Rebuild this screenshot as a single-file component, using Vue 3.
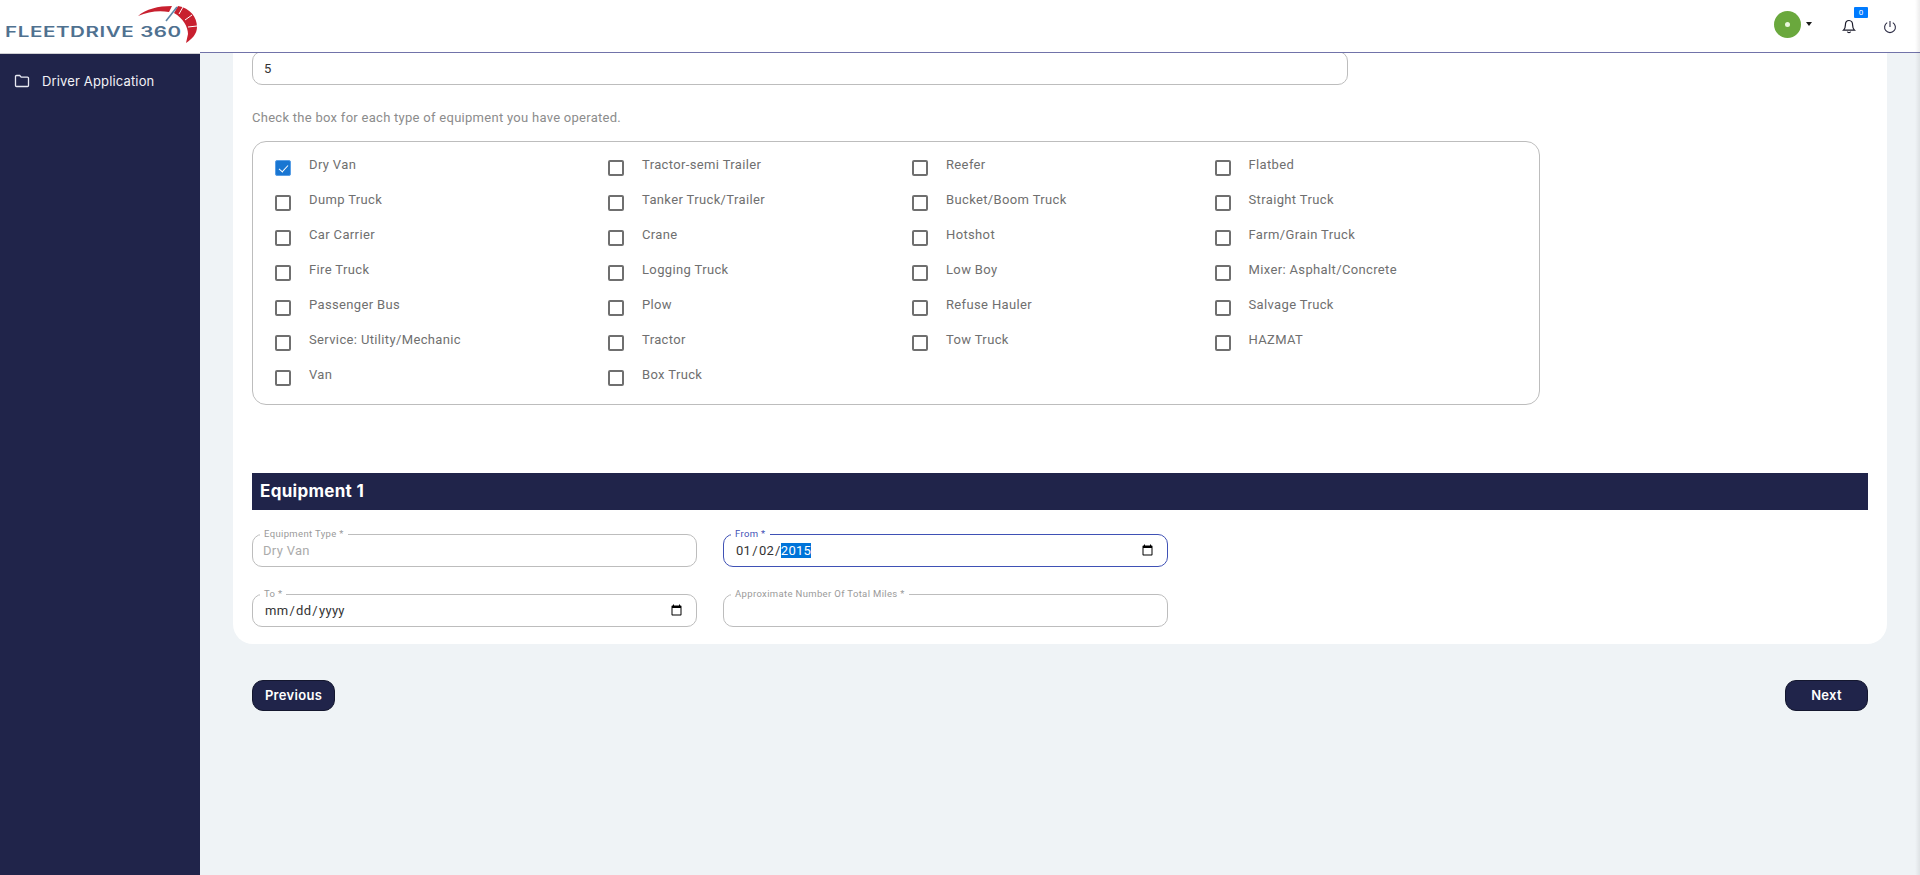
<script setup>
const equipment = [
  'Dry Van', 'Tractor-semi Trailer', 'Reefer', 'Flatbed',
  'Dump Truck', 'Tanker Truck/Trailer', 'Bucket/Boom Truck', 'Straight Truck',
  'Car Carrier', 'Crane', 'Hotshot', 'Farm/Grain Truck',
  'Fire Truck', 'Logging Truck', 'Low Boy', 'Mixer: Asphalt/Concrete',
  'Passenger Bus', 'Plow', 'Refuse Hauler', 'Salvage Truck',
  'Service: Utility/Mechanic', 'Tractor', 'Tow Truck', 'HAZMAT',
  'Van', 'Box Truck'
]
</script>

<template>
  <div class="app">
    <aside class="side">
      <div class="brand">
        <div class="logo">
          <span class="logo-text">FLEETDRIVE 360</span>
          <svg class="gauge" width="70" height="46" viewBox="0 0 70 46">
            <path d="M2 15 C10 8 22 5 36 5 L33 11 C22 9 12 11 2 15Z" fill="#c8202f"/>
            <path d="M42 5 C54 7 61 16 61 26 C61 33 56 38 50 42 L52 33 C52 26 47 17 38 12Z" fill="#c8202f"/>
            <path d="M47 6 L43 13 M56 14 L49 19 M61 25 L52 26" stroke="#fff" stroke-width="1"/>
            <path d="M30 20 L41 6" stroke="#5d86a8" stroke-width="1.6"/>
          </svg>
        </div>
      </div>
      <nav class="nav">
        <a class="nav-item">
          <svg width="16" height="14" viewBox="0 0 16 14" fill="none" stroke="#e8e9f2" stroke-width="1.3">
            <path d="M1.5 2.5 a1 1 0 0 1 1-1 h3.2 l1.5 1.7 h6.3 a1 1 0 0 1 1 1 v7.3 a1 1 0 0 1-1 1 h-11 a1 1 0 0 1-1-1z"/>
          </svg>
          <span>Driver Application</span>
        </a>
      </nav>
    </aside>

    <div class="right">
      <header class="top">
        <div class="avatar-wrap">
          <span class="avatar"><span class="dot"></span></span>
          <span class="caret"></span>
        </div>
        <div class="bell">
          <svg width="14" height="15" viewBox="0 0 14 15" fill="none" stroke="#1b1b2b" stroke-width="1.2">
            <path d="M7 1.5 C4.4 1.5 3.4 3.6 3.4 6 C3.4 9 2.6 10.2 1.5 11.2 H12.5 C11.4 10.2 10.6 9 10.6 6 C10.6 3.6 9.6 1.5 7 1.5Z"/>
            <path d="M5.4 12.6 C5.8 13.9 8.2 13.9 8.6 12.6"/>
          </svg>
          <span class="badge">0</span>
        </div>
        <svg class="power" width="14" height="14" viewBox="0 0 14 14" fill="none" stroke="#2b2b44" stroke-width="1.1">
          <path d="M7 1 V7"/>
          <path d="M4.2 2.6 A5.4 5.4 0 1 0 9.8 2.6"/>
        </svg>
      </header>

      <main class="main">
        <section class="card">
          <input class="plain" type="text" value="5" />
          <p class="hint">Check the box for each type of equipment you have operated.</p>
          <div class="box">
            <label v-for="(name, i) in equipment" :key="name" class="check">
              <input type="checkbox" :checked="i === 0" />
              <span>{{ name }}</span>
            </label>
          </div>

          <h2 class="bar">Equipment 1</h2>

          <div class="fields">
            <div class="field">
              <label>Equipment Type *</label>
              <input class="muted" type="text" value="Dry Van" readonly />
            </div>
            <div class="field focus">
              <label>From *</label>
              <input class="from" type="date" value="2015-01-02" />
            </div>
            <div class="field">
              <label>To *</label>
              <input type="date" />
            </div>
            <div class="field">
              <label>Approximate Number Of Total Miles *</label>
              <input type="text" />
            </div>
          </div>
        </section>

        <div class="actions">
          <button class="btn prev">Previous</button>
          <button class="btn next">Next</button>
        </div>
      </main>
    </div>
    <div class="edge"></div>
  </div>
</template>

<style>
html, body { margin: 0; height: 100%; overflow: hidden; }
</style>

<style scoped>
.app {
  display: flex;
  width: 1920px;
  height: 875px;
  overflow: hidden;
  position: relative;
  font-family: Roboto, "Liberation Sans", sans-serif;
  background: #eff3f6;
}
.side { width: 200px; flex: none; display: flex; flex-direction: column; }
.brand {
  height: 53px;
  background: #fff;
  border-bottom: 1px solid #d0d0d4;
  flex: none;
}
.logo { position: relative; width: 200px; height: 53px; }
.logo-text {
  position: absolute;
  left: 5px;
  top: 22px;
  font-family: Inter, sans-serif;
  font-weight: 600;
  font-size: 14.5px;
  line-height: 20px;
  letter-spacing: 0.4px;
  color: #4f7190;
  white-space: nowrap;
  transform: scaleX(1.42);
  transform-origin: left center;
}
.gauge { position: absolute; left: 136px; top: 1px; }
.nav { flex: 1; background: #20244a; padding-top: 17px; }
.nav-item {
  display: flex;
  align-items: center;
  gap: 12px;
  padding-left: 14px;
  height: 20px;
  color: #f2f2f7;
  font-family: Inter, sans-serif;
  font-size: 13px;
  font-weight: 400;
  letter-spacing: 0.15px;
}
.right { flex: 1; display: flex; flex-direction: column; min-width: 0; }
.top {
  height: 52px;
  flex: none;
  background: #fff;
  border-bottom: 1px solid #7173a9;
  display: flex;
  align-items: center;
  justify-content: flex-end;
  position: relative;
  z-index: 1;
  padding-right: 23px;
  box-sizing: content-box;
}
.avatar-wrap { display: flex; align-items: center; gap: 5px; margin-right: 30px; margin-top: -4px; }
.avatar {
  width: 27px;
  height: 27px;
  border-radius: 50%;
  background: #6aa83d;
  display: flex;
  align-items: center;
  justify-content: center;
}
.dot { width: 5px; height: 5px; border-radius: 50%; background: #e9f6dc; }
.caret {
  width: 0;
  height: 0;
  border-left: 3.5px solid transparent;
  border-right: 3.5px solid transparent;
  border-top: 4px solid #1a1a1a;
}
.bell { position: relative; display: flex; margin-right: 27px; margin-top: 1px; }
.badge {
  position: absolute;
  left: 12px;
  top: -12px;
  width: 14px;
  height: 11px;
  background: #007bff;
  color: #fff;
  font-size: 8px;
  line-height: 11px;
  text-align: center;
  border-radius: 1px;
}
.power { margin-top: 1px; }
.main { flex: 1; padding: 0 33px; min-height: 0; }
.card {
  background: #fff;
  border-radius: 0 0 20px 20px;
  padding: 0 19px 17px;
}
input { box-sizing: border-box; font-family: Roboto, sans-serif; outline: none; }
.plain {
  display: block;
  width: 1096px;
  height: 34px;
  margin-top: -2px;
  border: 1px solid #bdbdbd;
  border-radius: 10px;
  padding: 0 11px;
  font-size: 13px;
  color: #333;
  position: relative;
}
.hint {
  margin: 25px 0 15px;
  font-size: 13px;
  line-height: 16px;
  letter-spacing: 0.28px;
  color: #8c8c8c;
}
.box {
  width: 1288px;
  box-sizing: border-box;
  height: 264px;
  border: 1px solid #bdbdbd;
  border-radius: 14px;
  padding: 18.4px 22px 0;
  display: grid;
  grid-template-columns: 333px 304px 302.5px 1fr;
  grid-auto-rows: 35px;
}
.check {
  display: flex;
  align-items: flex-start;
  gap: 18px;
  font-size: 13px;
  line-height: 16px;
  letter-spacing: 0.36px;
  font-weight: 400;
  color: #6f6f6f;
}
.check span { margin-top: -3px; }
.check input {
  appearance: none;
  width: 16px;
  height: 16px;
  margin: 0;
  flex: none;
  border: 2px solid #6f6f6f;
  border-radius: 2px;
  background: #fff;
  position: relative;
}
.check input:checked { background: #1976d2; border-color: #5a9fe6; border-width: 1px; }
.check input:checked::after {
  content: "";
  position: absolute;
  left: 4.5px;
  top: 1.5px;
  width: 4px;
  height: 8px;
  border: solid #fff;
  border-width: 0 1.8px 1.8px 0;
  transform: rotate(42deg);
}
.bar {
  margin: 68px 0 24px;
  height: 37px;
  background: #20244a;
  color: #fff;
  font-family: Inter, sans-serif;
  font-size: 17px;
  font-weight: 700;
  line-height: 37px;
  letter-spacing: 0.3px;
  padding-left: 8px;
}
.fields {
  display: grid;
  grid-template-columns: 445px 445px;
  column-gap: 26px;
  row-gap: 27px;
}
.field { position: relative; height: 33px; }
.field input {
  width: 100%;
  height: 100%;
  border: 1px solid #bdbdbd;
  border-radius: 10px;
  padding: 0 11px 1px;
  font-size: 13px;
  letter-spacing: 0.3px;
  color: #333;
  background: #fff;
}
.field label {
  position: absolute;
  left: 8px;
  top: -6px;
  padding: 0 4px;
  background: #fff;
  font-size: 9.5px;
  line-height: 12px;
  letter-spacing: 0.35px;
  color: #9a9a9a;
  z-index: 1;
}
.field input.muted { color: #ababab; padding-left: 10px; }
.focus input { border-color: #3f51b5; }
.focus label { color: #3f51b5; }
.from::-webkit-datetime-edit-year-field {
  background: #0074d9;
  color: #fff;
  padding: 0;
  border-radius: 0;
}
.actions {
  display: flex;
  justify-content: space-between;
  padding: 36px 19px 0;
}
.btn {
  height: 31px;
  background: #20244a;
  border: 1px solid #14172f;
  border-radius: 11px;
  color: #fff;
  font-family: Inter, sans-serif;
  font-size: 13px;
  font-weight: 600;
  letter-spacing: 0.3px;
  padding: 0 0 2px;
}
.prev { width: 83px; }
.next { width: 83px; }
.edge {
  position: absolute;
  top: 0;
  bottom: 0;
  right: 0;
  width: 5px;
  background: linear-gradient(to right, rgba(0,0,0,0), rgba(0,0,0,0.07));
  z-index: 2;
  pointer-events: none;
}
</style>
